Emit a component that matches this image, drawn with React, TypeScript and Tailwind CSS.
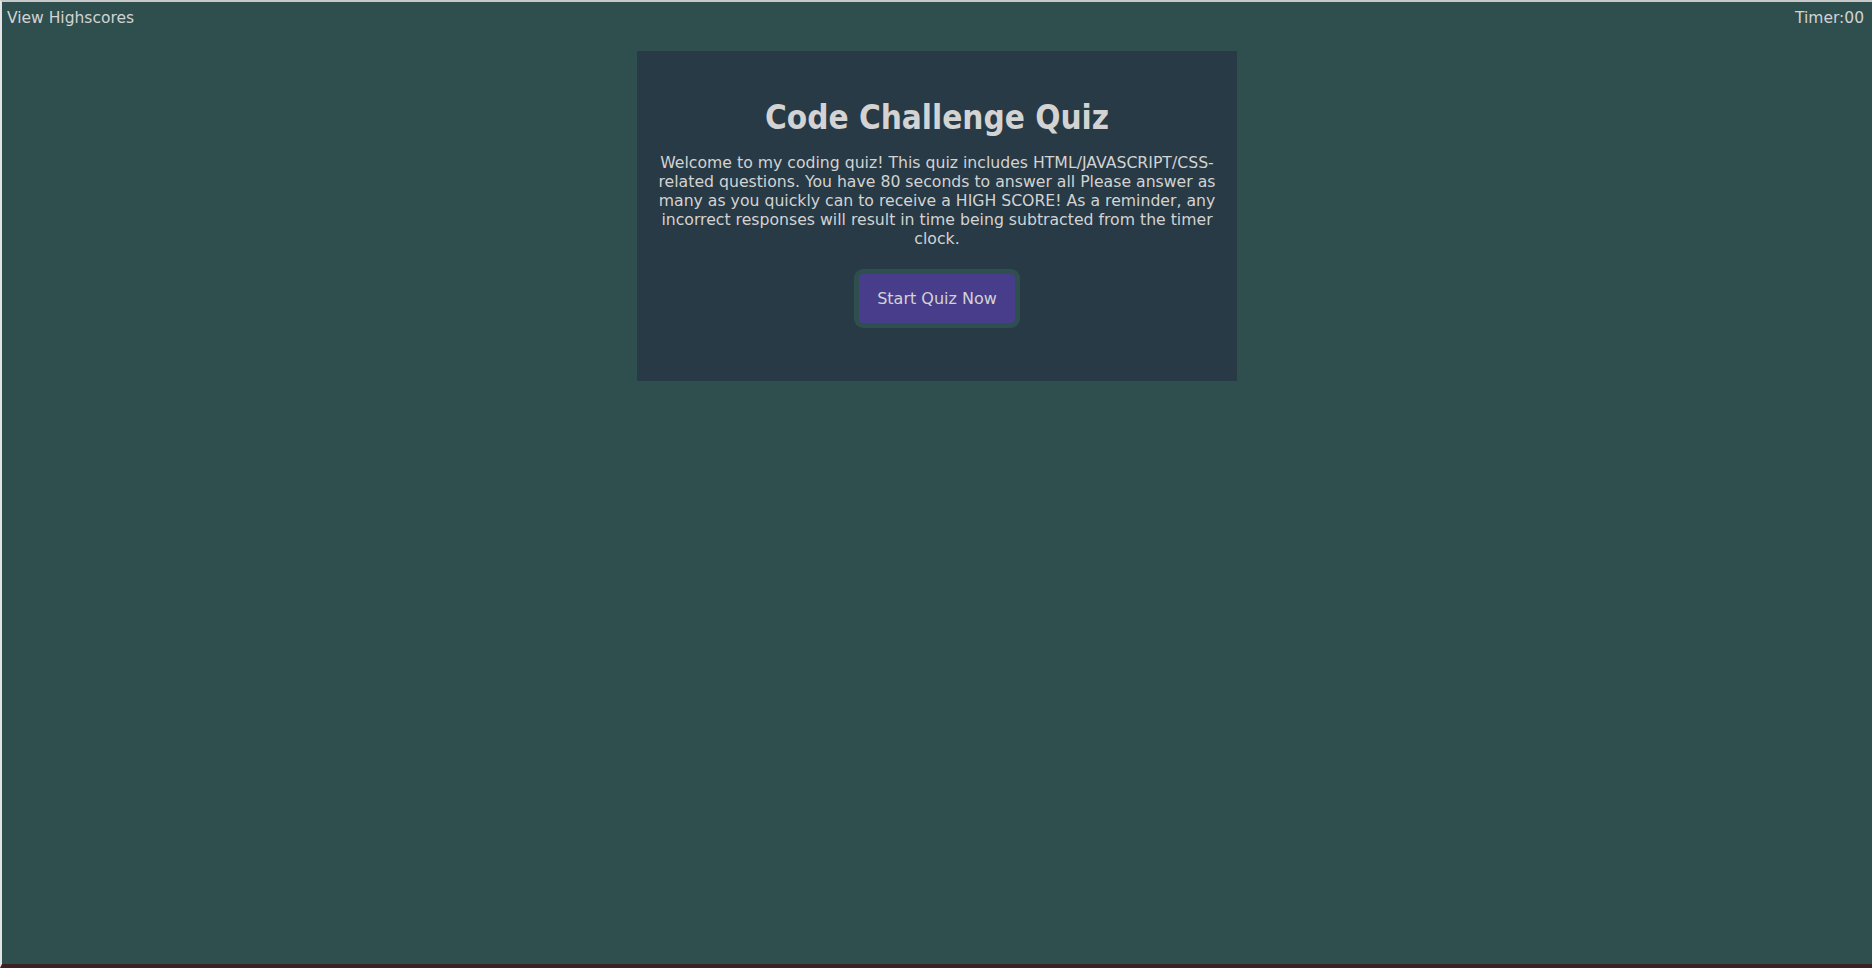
import React from "react";

export default function App() {
  return (
    <div
      className="flex h-[968px] w-full flex-col border-t-2 border-l-2 border-b-4 border-t-[#c8c8c8] border-l-[#e4e4e4] border-b-[#3a2222] bg-[#2f4f4f] text-[#d3d3d3]"
      style={{ fontFamily: '"DejaVu Sans", sans-serif' }}
    >
      {/* Top bar */}
      <header className="flex items-start justify-between pl-[5px] pr-[8px] pt-[7px] text-[15.5px] leading-[19px]">
        <span>View Highscores</span>
        <span>Timer:00</span>
      </header>

      {/* Intro card */}
      <main className="mx-auto mt-[23px] flex w-[600px] flex-col items-center bg-[#283a45] px-[18px] pt-[47px] pb-[53px] text-center">
        <h1
          className="text-[33px] font-bold leading-[40px]"
          style={{ fontFamily: '"DejaVu Sans Condensed", "DejaVu Sans", sans-serif' }}
        >
          Code Challenge Quiz
        </h1>
        <p className="mt-[15px] text-[15.7px] leading-[19px]">
          Welcome to my coding quiz! This quiz includes HTML/JAVASCRIPT/CSS-related questions. You have 80 seconds to
          answer all Please answer as many as you quickly can to receive a HIGH SCORE! As a reminder, any incorrect
          responses will result in time being subtracted from the timer clock.
        </p>
        <button className="mt-[21px] h-[59px] w-[166px] rounded-[9px] border-[5px] border-[#2f4f4f] bg-[#483d8b] text-[16px] text-[#d3d3d3]">
          Start Quiz Now
        </button>
      </main>
    </div>
  );
}
